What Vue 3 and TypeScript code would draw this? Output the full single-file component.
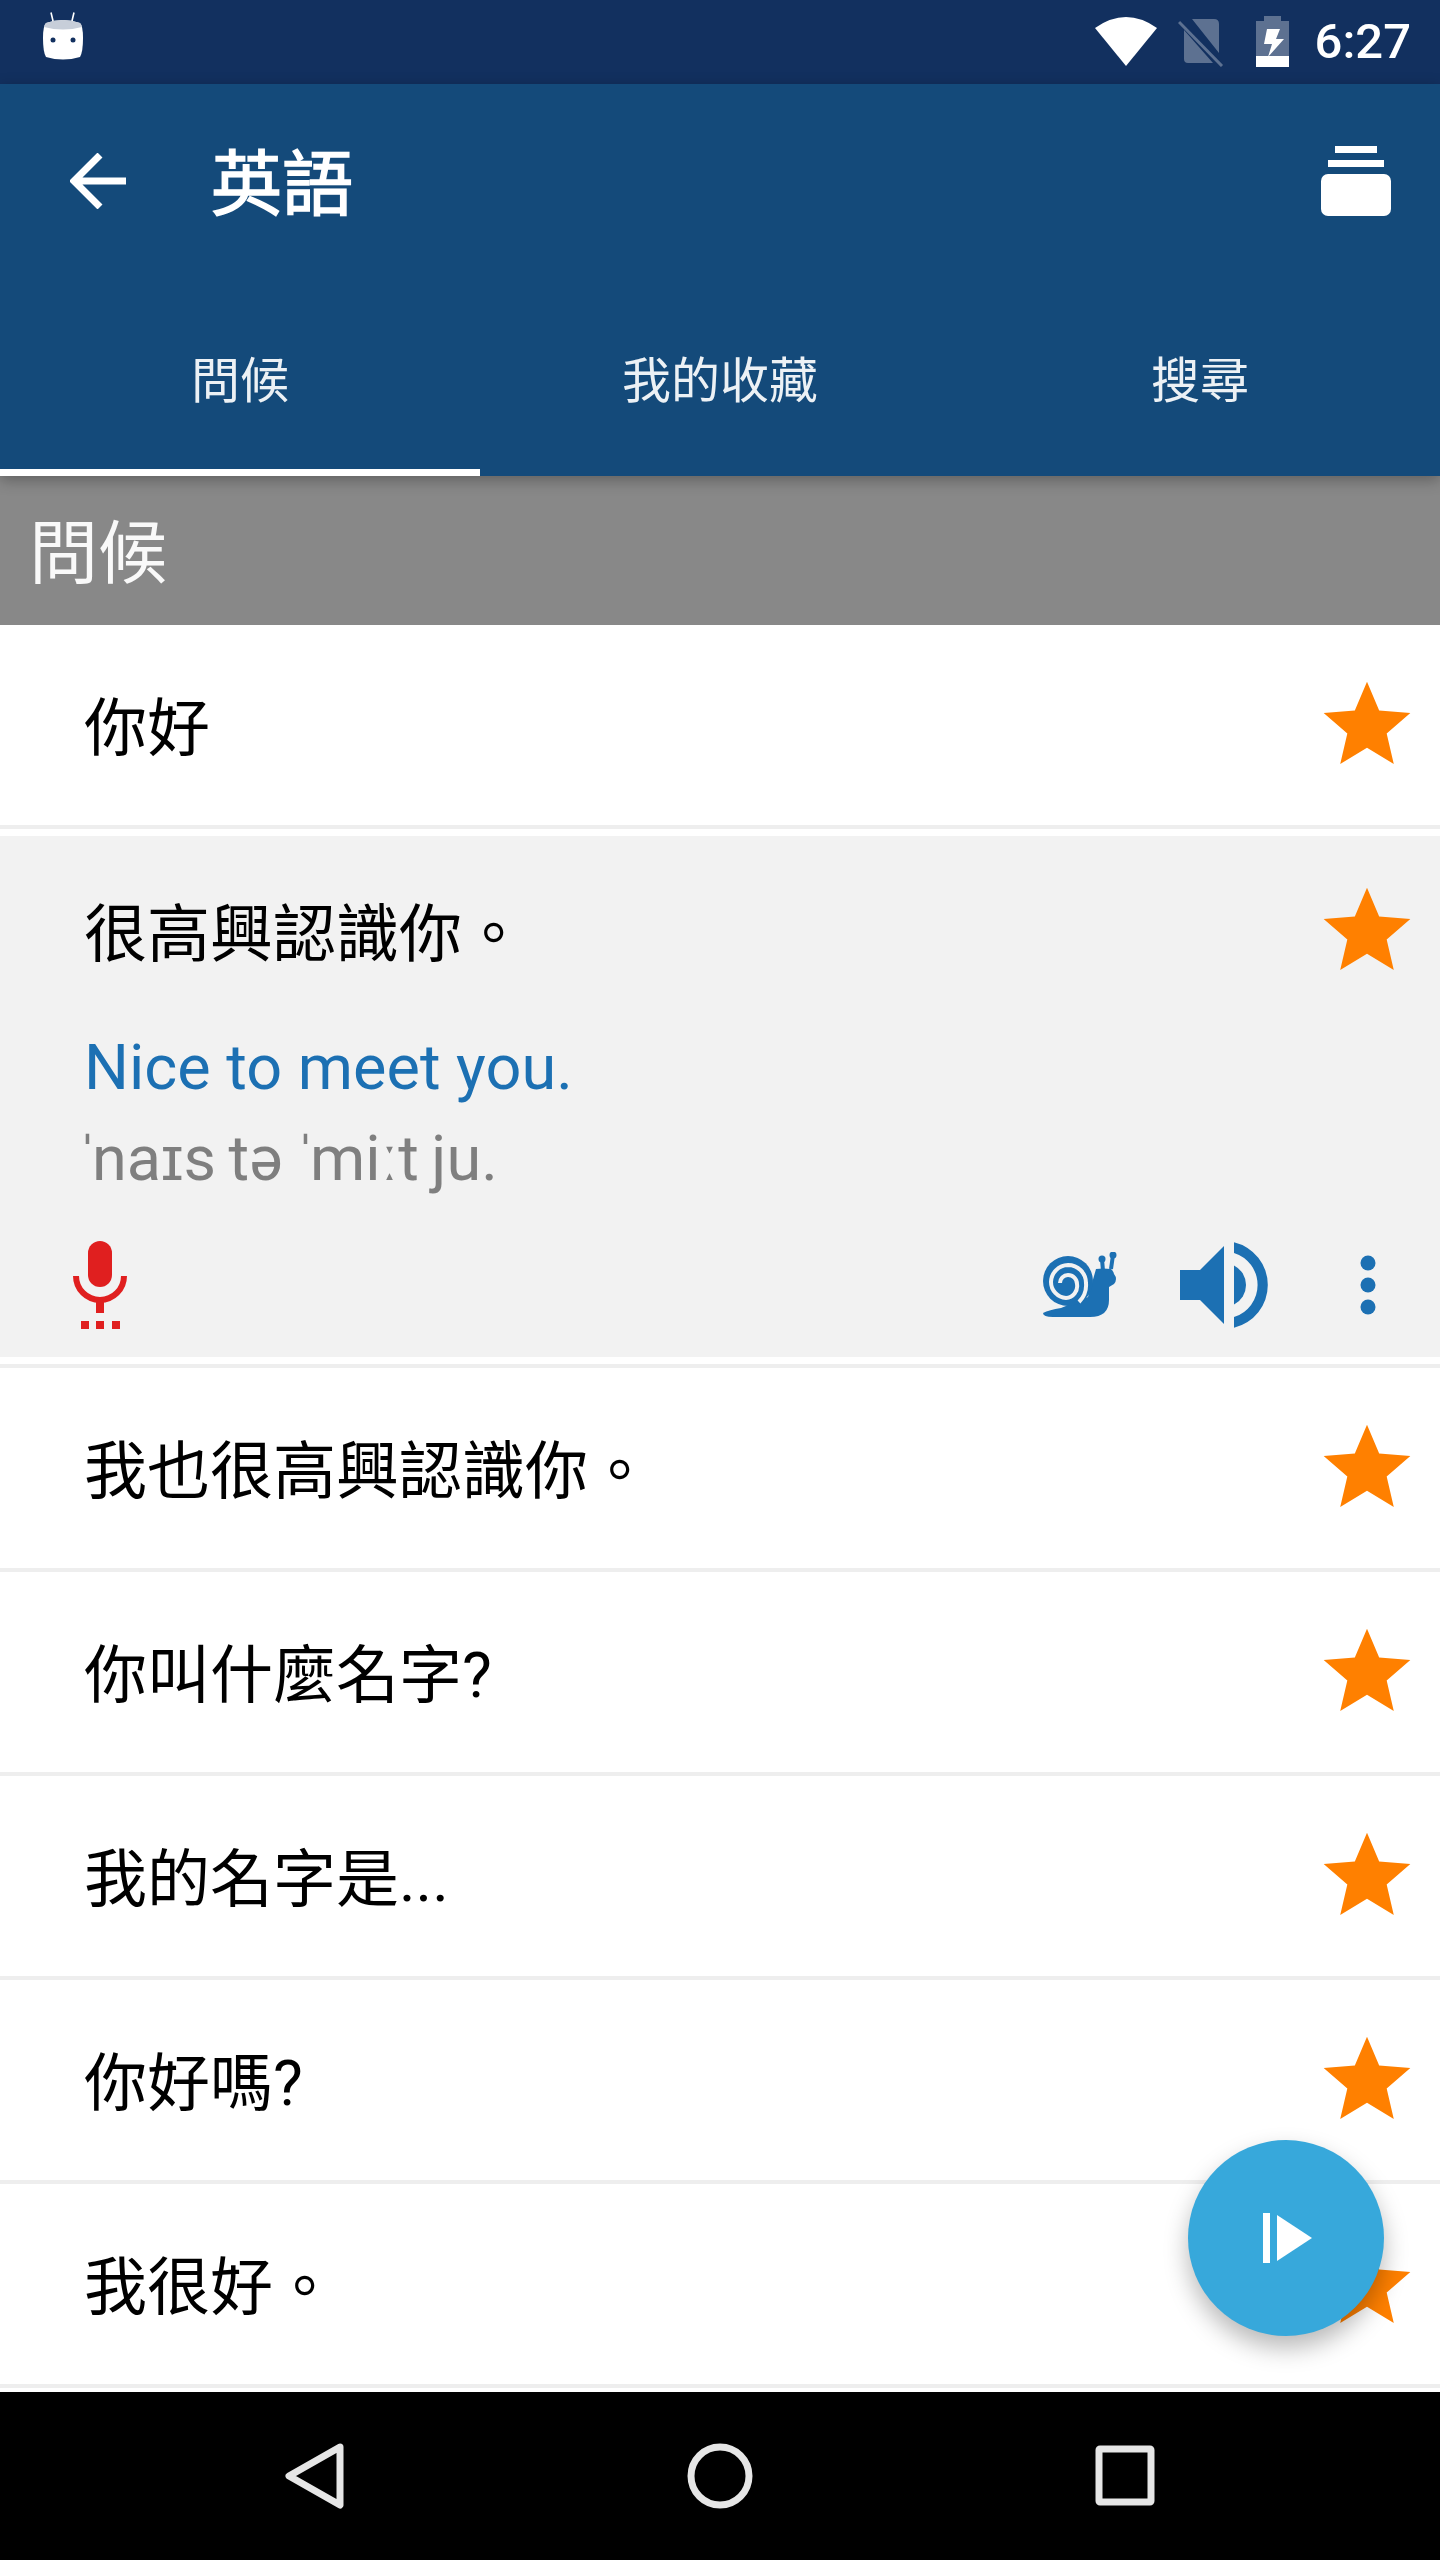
<template>
  <div class="screen">
    <div class="status-bar">
      <svg class="android" width="40" height="48" viewBox="0 0 40 48">
        <path d="M8 0.5 L10.5 11 M31 0.5 L28.5 11" stroke="#fff" stroke-width="1.6" fill="none" />
        <path d="M3 11 Q20 5 37 11 Q40 14 40 26 Q40 40 37 45 Q20 50 3 45 Q0 40 0 26 Q0 14 3 11 Z" fill="#fff" />
        <path d="M3 11 Q20 5 37 11 Q38.5 12.5 39 15 Q20 20 1 15 Q1.500 12.500 3 11 Z" fill="#c7ced9" />
        <circle cx="10" cy="28" r="2.500" fill="#12305f" />
        <circle cx="30" cy="28" r="2.500" fill="#12305f" />
      </svg>
      <div class="status-right">
        <svg class="wifi" width="62" height="49" viewBox="0 0 62 49">
          <path d="M0 11 Q31 -11 62 11 L31 49 Z" fill="#fff" />
        </svg>
        <svg class="sim" width="46" height="48" viewBox="0 0 46 48">
          <path d="M14 0 H36 Q41 0 41 5 V34 Z M6 11 L35 44 Q34 44 33 44 H10 Q6 44 6 40 Z" fill="#5d7191" />
          <path d="M1 3 L44 47" stroke="#5d7191" stroke-width="3" />
        </svg>
        <svg class="battery" width="33" height="51" viewBox="0 0 33 51">
          <path d="M8 0 H25 V5 H33 V40 H0 V5 H8 Z" fill="#5d7191" />
          <rect x="0" y="40" width="33" height="11" fill="#fff" />
          <path d="M11 13 H24 L20 23 H28 L12 41 L16 28 H8 Z" fill="#fff" />
        </svg>
        <span class="time">6:27</span>
      </div>
    </div>

    <header class="app-bar">
      <div class="toolbar">
        <svg class="back" width="56" height="56" viewBox="0 0 56 56">
          <path d="M30 2 L4 28 L30 54 M4 28 H56" stroke="#fff" stroke-width="7" fill="none" />
        </svg>
        <h1 class="title">英語</h1>
        <svg class="stack" width="70" height="70" viewBox="0 0 70 70">
          <rect x="14" y="0" width="42" height="7" fill="#fff" />
          <rect x="7" y="14" width="56" height="7" fill="#fff" />
          <rect x="0" y="28" width="70" height="42" rx="7" fill="#fff" />
        </svg>
      </div>
      <nav class="tabs">
        <div v-for="(tab, i) in tabs" :key="tab" class="tab" :class="{ active: i === 0 }">{{ tab }}</div>
      </nav>
    </header>

    <div class="section-head">問候</div>

    <main class="list">
      <template v-for="(row, i) in rows" :key="row">
        <div v-if="i === expanded" class="expanded">
          <div class="expanded-head">
            <span class="phrase">{{ row }}</span>
            <svg class="star" width="104" height="104" viewBox="0 0 24 24">
              <path :d="starPath" fill="#ff8000" />
            </svg>
          </div>
          <div class="english">Nice to meet you.</div>
          <div class="phonetic"><span class="stress">ˈ</span>naɪs tə <span class="stress">ˈ</span>miːt ju.</div>
          <div class="actions">
            <svg width="54" height="88" viewBox="0 0 54 88">
              <rect x="15" y="0" width="24" height="46" rx="12" fill="#e01f1f" />
              <path d="M3 35 A24 24 0 0 0 51 35" stroke="#e01f1f" stroke-width="6" fill="none" />
              <rect x="23" y="58" width="8" height="14" fill="#e01f1f" />
              <rect x="8" y="80" width="8" height="8" fill="#e01f1f" />
              <rect x="23" y="80" width="8" height="8" fill="#e01f1f" />
              <rect x="39" y="80" width="8" height="8" fill="#e01f1f" />
            </svg>
            <span class="spacer"></span>
            <svg class="snail" width="74" height="66" viewBox="0 0 74 66">
              <path d="M59 7 L60 19 M70 3 L68 17" stroke="#1c70b3" stroke-width="4" fill="none" />
              <circle cx="59" cy="7" r="3.500" fill="#1c70b3" />
              <circle cx="70" cy="3" r="3.500" fill="#1c70b3" />
              <path d="M0 61 Q6 58 18 56 L45 45 L53 17 Q60 16 68 17 Q71 20 71 22 Q75 27 71 32 L66 35 V48 Q66 65 47 65 H10 Q0 65 0 61 Z" fill="#1c70b3" />
              <circle cx="25" cy="29" r="25" fill="#1c70b3" />
              <path d="M36 50 A24 24 0 0 0 43 31 A18 18 0 0 0 25 13 A17.500 17.500 0 0 0 8 30 A16 16 0 0 0 23 46 A12 12 0 0 0 34 32 A9 9 0 0 0 25 23 A8 8 0 0 0 17 31" stroke="#f2f2f2" stroke-width="4" fill="none" />
            </svg>
            <svg class="speaker" width="88" height="86" viewBox="0 0 88 86">
              <path d="M0 28 H20 L44 4 V82 L20 58 H0 Z" fill="#1c70b3" />
              <path d="M54 23.400 A22 22 0 0 1 54 62.600 Z" fill="#1c70b3" />
              <path d="M54 0.200 A44 44 0 0 1 54 85.800 V75 A33.500 33.500 0 0 0 54 11 Z" fill="#1c70b3" />
            </svg>
            <svg class="more" width="16" height="60" viewBox="0 0 16 60">
              <circle cx="8" cy="8" r="7.500" fill="#1c70b3" />
              <circle cx="8" cy="30" r="7.500" fill="#1c70b3" />
              <circle cx="8" cy="52" r="7.500" fill="#1c70b3" />
            </svg>
          </div>
        </div>
        <div v-else class="row">
          <span class="phrase">{{ row }}</span>
          <svg class="star" width="104" height="104" viewBox="0 0 24 24">
            <path :d="starPath" fill="#ff8000" />
          </svg>
        </div>
      </template>
    </main>

    <button class="fab">
      <svg width="49" height="50" viewBox="0 0 49 50">
        <rect x="0" y="0" width="7" height="50" fill="#fff" />
        <path d="M14 2 L49 25 L14 48 Z" fill="#fff" />
      </svg>
    </button>

    <footer class="nav-bar">
      <svg width="120" height="66" viewBox="0 0 120 66">
        <path d="M85 4 L34 33 L85 62 Z" stroke="#e6e6e6" stroke-width="7" stroke-linejoin="round" fill="none" />
      </svg>
      <svg width="120" height="66" viewBox="0 0 120 66">
        <circle cx="60" cy="33" r="29" stroke="#e6e6e6" stroke-width="7" fill="none" />
      </svg>
      <svg width="120" height="66" viewBox="0 0 120 66">
        <rect x="34" y="6" width="52" height="53" rx="1" stroke="#e6e6e6" stroke-width="7" fill="none" />
      </svg>
    </footer>
  </div>
</template>

<script setup lang="ts">
const tabs: string[] = ['問候', '我的收藏', '搜尋']

const rows: string[] = [
  '你好',
  '很高興認識你。',
  '我也很高興認識你。',
  '你叫什麼名字?',
  '我的名字是...',
  '你好嗎?',
  '我很好。',
]

const expanded = 1

const starPath = 'M12 17.27L18.18 21l-1.64-7.03L22 9.24l-7.19-.61L12 2 9.19 8.63 2 9.24l5.46 4.73L5.82 21z'
</script>

<style>
html,
body {
  margin: 0;
  background: #fff;
}
</style>

<style scoped>
.screen {
  position: relative;
  width: 1440px;
  height: 2560px;
  overflow: hidden;
  display: flex;
  flex-direction: column;
  background: #fff;
  font-family: Roboto, "Noto Sans CJK TC", sans-serif;
}

.status-bar {
  height: 84px;
  flex: none;
  display: flex;
  align-items: center;
  justify-content: space-between;
  padding: 0 30px 0 43px;
  box-sizing: border-box;
  background: #12305f;
}

.android {
  margin-top: -12px;
}

.status-right {
  display: flex;
  align-items: center;
}

.wifi {
  margin-top: -1px;
  margin-left: 1px;
}

.sim {
  margin-left: 21px;
  margin-top: 2px;
}

.battery {
  margin-left: 32px;
  margin-top: -1px;
}

.time {
  margin-left: 26px;
  margin-right: -1px;
  font-size: 49px;
  font-weight: 500;
  line-height: 84px;
  color: #fff;
}

.app-bar {
  position: relative;
  z-index: 2;
  flex: none;
  background: #144a7a;
  box-shadow: 0 4px 14px rgba(0, 0, 0, 0.3);
}

.toolbar {
  height: 194px;
  display: flex;
  align-items: center;
  padding: 0 49px 0 70px;
}

.title {
  flex: 1;
  margin: 0 0 7px 85px;
  font-size: 71px;
  font-weight: 400;
  -webkit-text-stroke: 1.5px #fff;
  color: #fff;
}

.tabs {
  height: 198px;
  display: grid;
  grid-template-columns: repeat(3, 480px);
}

.tab {
  display: flex;
  align-items: center;
  justify-content: center;
  padding-top: 5px;
  box-sizing: border-box;
  border-bottom: 7px solid transparent;
  font-size: 49px;
  color: rgba(255, 255, 255, 0.92);
}

.tab.active {
  border-bottom-color: #fff;
}

.section-head {
  height: 149px;
  flex: none;
  display: flex;
  align-items: center;
  padding: 0 0 5px 29px;
  box-sizing: border-box;
  background: #888;
  font-size: 69px;
  font-weight: 400;
  color: rgba(255, 255, 255, 0.95);
}

.list {
  flex: 1;
  display: flex;
  flex-direction: column;
}

.row {
  height: 200px;
  flex: none;
  display: flex;
  align-items: center;
  justify-content: space-between;
  padding: 0 21px 0 84px;
  border-bottom: 4px solid #eee;
}

.phrase {
  padding-bottom: 6px;
  font-size: 63px;
  color: #000;
}

.expanded {
  margin: 7px 0 11px;
  height: 521px;
  flex: none;
  background: #f2f2f2;
  position: relative;
}

.expanded::after {
  content: "";
  position: absolute;
  left: 0;
  right: 0;
  bottom: -11px;
  height: 4px;
  background: #eee;
}

.expanded-head {
  height: 185px;
  padding: 5px 21px 0 84px;
  box-sizing: border-box;
  display: flex;
  align-items: center;
  justify-content: space-between;
}

.english,
.phonetic {
  font-size: 63px;
}

.english {
  padding-left: 84px;
  line-height: 94px;
  color: #1c70b3;
}

.phonetic {
  padding-left: 77px;
  padding-bottom: 2px;
  line-height: 88px;
  word-spacing: -3px;
  color: #7f7f7f;
}

.stress {
  letter-spacing: -6px;
}

.actions {
  height: 152px;
  padding: 8px 64px 0 73px;
  box-sizing: border-box;
  display: flex;
  align-items: center;
}

.spacer {
  flex: 1;
}

.speaker {
  margin-left: 63px;
}

.more {
  margin-left: 92px;
}

.fab {
  position: absolute;
  left: 1188px;
  top: 2140px;
  z-index: 3;
  width: 196px;
  height: 196px;
  padding: 0;
  border: none;
  border-radius: 50%;
  display: flex;
  align-items: center;
  justify-content: center;
  background: #37a8db;
  box-shadow: 0 12px 24px rgba(0, 0, 0, 0.28);
}

.fab svg {
  margin-left: 2px;
}

.nav-bar {
  height: 168px;
  flex: none;
  margin-top: auto;
  display: flex;
  align-items: center;
  justify-content: center;
  gap: 285px;
  background: #000;
}
</style>
